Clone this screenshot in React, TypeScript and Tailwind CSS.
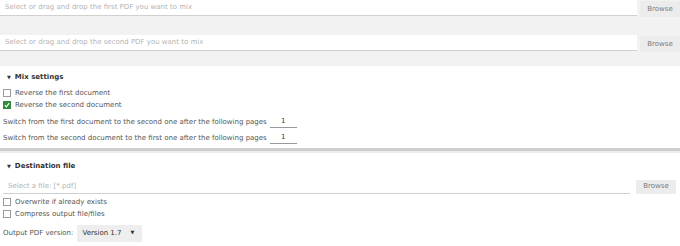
import React from 'react';

const font = "font-['DejaVu_Sans',sans-serif]";

function FileRow({ placeholder }: { placeholder: string }) {
  return (
    <div className="flex items-start gap-[3px]">
      <div className="flex-1 h-[16px] bg-white border-b border-[#d0d0d0] pl-[5px] flex items-center text-[#b4b4b4]">
        {placeholder}
      </div>
      <div className="w-[40px] h-[16px] mt-[1px] bg-[#ececec] text-[#7a7a7a] flex items-center justify-center">Browse</div>
    </div>
  );
}

function Check({ label, checked }: { label: string; checked?: boolean }) {
  return (
    <label className="flex items-center gap-[4px] h-[11px]">
      {checked ? (
        <span className="w-[8px] h-[8px] bg-[#2f8a3b] flex items-center justify-center">
          <svg width="6" height="6" viewBox="0 0 6 6">
            <path d="M0.8 3.2 L2.4 4.8 L5.2 1.2" stroke="white" strokeWidth="1.2" fill="none" />
          </svg>
        </span>
      ) : (
        <span className="w-[8px] h-[8px] border border-[#9a9a9a] bg-white" />
      )}
      <span className="text-[#555]">{label}</span>
    </label>
  );
}

function Header({ title }: { title: string }) {
  return (
    <div className="flex items-center gap-[4px] pl-[4px] font-bold text-[#333]">
      <span className="text-[5px]">▼</span>
      <span>{title}</span>
    </div>
  );
}

function PagesRow({ label }: { label: string }) {
  return (
    <div className="flex items-end gap-[3px] text-[#555]">
      <span>{label}</span>
      <span className="w-[27px] border-b border-[#999] text-center text-[#333] leading-[9px] pb-[1px]">1</span>
    </div>
  );
}

export default function App() {
  return (
    <div className={`${font} text-[7px] w-[680px] h-[246px] bg-white overflow-hidden`}>
      <div className="bg-[#f2f2f2] h-[66px] flex flex-col gap-[18px]">
        <FileRow placeholder="Select or drag and drop the first PDF you want to mix" />
        <FileRow placeholder="Select or drag and drop the second PDF you want to mix" />
      </div>

      <div className="bg-white h-[82px] pt-[6px] pl-[3px]">
        <Header title="Mix settings" />
        <div className="mt-[5px] flex flex-col gap-[1px]">
          <Check label="Reverse the first document" />
          <Check label="Reverse the second document" checked />
        </div>
        <div className="mt-[6px] flex flex-col gap-[5px]">
          <PagesRow label="Switch from the first document to the second one after the following pages" />
          <PagesRow label="Switch from the second document to the first one after the following pages" />
        </div>
      </div>

      <div className="h-[3px] bg-[#cfcfcf]" />
      <div className="h-[2px] bg-[#ececec]" />

      <div className="pl-[3px] pt-[8px]">
        <Header title="Destination file" />
        <div className="mt-[8px] flex items-end gap-[6px] pr-[4px]">
          <div className="flex-1 h-[14px] border-b border-[#cfcfcf] pl-[5px] flex items-center text-[#b4b4b4]">
            Select a file: [*.pdf]
          </div>
          <div className="w-[40px] h-[14px] bg-[#ececec] text-[#7a7a7a] flex items-center justify-center">Browse</div>
        </div>
        <div className="mt-[3px] flex flex-col gap-[1px]">
          <Check label="Overwrite if already exists" />
          <Check label="Compress output file/files" />
        </div>
        <div className="mt-[5px] flex items-center gap-[4px] text-[#555]">
          <span>Output PDF version:</span>
          <div className="w-[65px] h-[17px] bg-[#eeeeee] flex items-center pl-[5px] pr-[8px] justify-between text-[#333]">
            <span>Version 1.7</span>
            <span className="text-[5px]">▼</span>
          </div>
        </div>
      </div>
    </div>
  );
}
